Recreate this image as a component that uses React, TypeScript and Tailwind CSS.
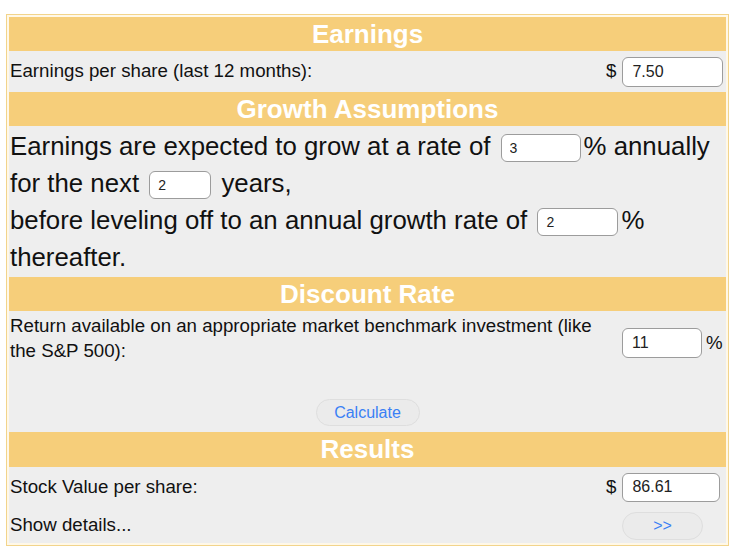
import React from "react";

const BAND = "bg-[#f6ce7a]";

function Header({ title }: { title: string }) {
  return (
    <div className={`${BAND} flex h-[34px] items-center justify-center text-[26px] font-bold text-white`}>
      {title}
    </div>
  );
}

function InlineInput({ value, width }: { value: string; width: string }) {
  return (
    <input
      readOnly
      value={value}
      className={`${width} mx-[3px] h-[28px] rounded-[6px] border border-[#9c9c9c] bg-white pl-[8px] align-middle text-[14px] text-[#222] outline-none`}
    />
  );
}

function App() {
  return (
    <main className="min-h-screen bg-white pt-[14px] font-['Liberation_Sans',Arial,sans-serif] text-[#111]">
      <div className="ml-[6px] w-[723px] border border-[#f2d48b] bg-[#fff8e8] p-[2px]">
        <Header title="Earnings" />
        <div className="flex h-[41px] items-center bg-[#eeeeee] pl-px">
          <p className="flex-1 text-[18.7px]">Earnings per share (last 12 months):</p>
          <div className="flex w-[122px] items-center pl-[2px]">
            <span className="text-[18.7px]">$</span>
            <input
              readOnly
              value="7.50"
              className="ml-[6px] h-[30px] w-[101px] rounded-[6px] border border-[#9c9c9c] bg-white pl-[9px] text-[16px] text-[#222] outline-none"
            />
          </div>
        </div>

        <Header title="Growth Assumptions" />
        <div className="h-[151px] bg-[#eeeeee] pl-px pt-[2px] text-[25.8px] leading-[37px]">
          <p>
            Earnings are expected to grow at a rate of <InlineInput value="3" width="w-[80px]" />% annually
          </p>
          <p>
            for the next <InlineInput value="2" width="w-[62px]" /> years,
          </p>
          <p>
            before leveling off to an annual growth rate of <InlineInput value="2" width="w-[81px]" />%
          </p>
          <p>thereafter.</p>
        </div>

        <Header title="Discount Rate" />
        <div className="h-[121px] bg-[#eeeeee] pb-[6px]">
          <div className="flex items-start pl-px pt-[2px]">
            <p className="w-[600px] text-[18.7px] leading-[25px]">
              Return available on an appropriate market benchmark investment (like the S&amp;P 500):
            </p>
            <div className="ml-[12px] mt-[15px] flex items-center">
              <input
                readOnly
                value="11"
                className="h-[30px] w-[80px] rounded-[6px] border border-[#9c9c9c] bg-white pl-[9px] text-[16px] text-[#222] outline-none"
              />
              <span className="ml-[4px] text-[18.7px]">%</span>
            </div>
          </div>
          <div className="mt-[36px] flex justify-center">
            <button className="h-[27px] w-[104px] rounded-full border border-[#dedede] bg-[#ebebeb] text-[16px] text-[#3a80f5]">
              Calculate
            </button>
          </div>
        </div>

        <div className={`${BAND} flex h-[35px] items-center justify-center text-[26px] font-bold text-white`}>
          Results
        </div>
        <div className="flex h-[40px] items-center bg-[#eeeeee] pl-px">
          <p className="flex-1 text-[18.7px]">Stock Value per share:</p>
          <div className="flex w-[122px] items-center pl-[2px]">
            <span className="text-[18.7px]">$</span>
            <input
              readOnly
              value="86.61"
              className="ml-[6px] h-[29px] w-[98px] rounded-[6px] border border-[#9c9c9c] bg-white pl-[9px] text-[16px] text-[#222] outline-none"
            />
          </div>
        </div>
        <div className="flex h-[36px] items-center bg-[#eeeeee] pl-px">
          <p className="flex-1 text-[18.7px]">Show details...</p>
          <div className="flex w-[122px] items-center pl-[18px]">
            <button className="mt-[2px] h-[28px] w-[81px] rounded-full border border-[#dedede] bg-[#ebebeb] text-[16px] text-[#3a80f5]">
              &gt;&gt;
            </button>
          </div>
        </div>
      </div>
    </main>
  );
}

export default App;
